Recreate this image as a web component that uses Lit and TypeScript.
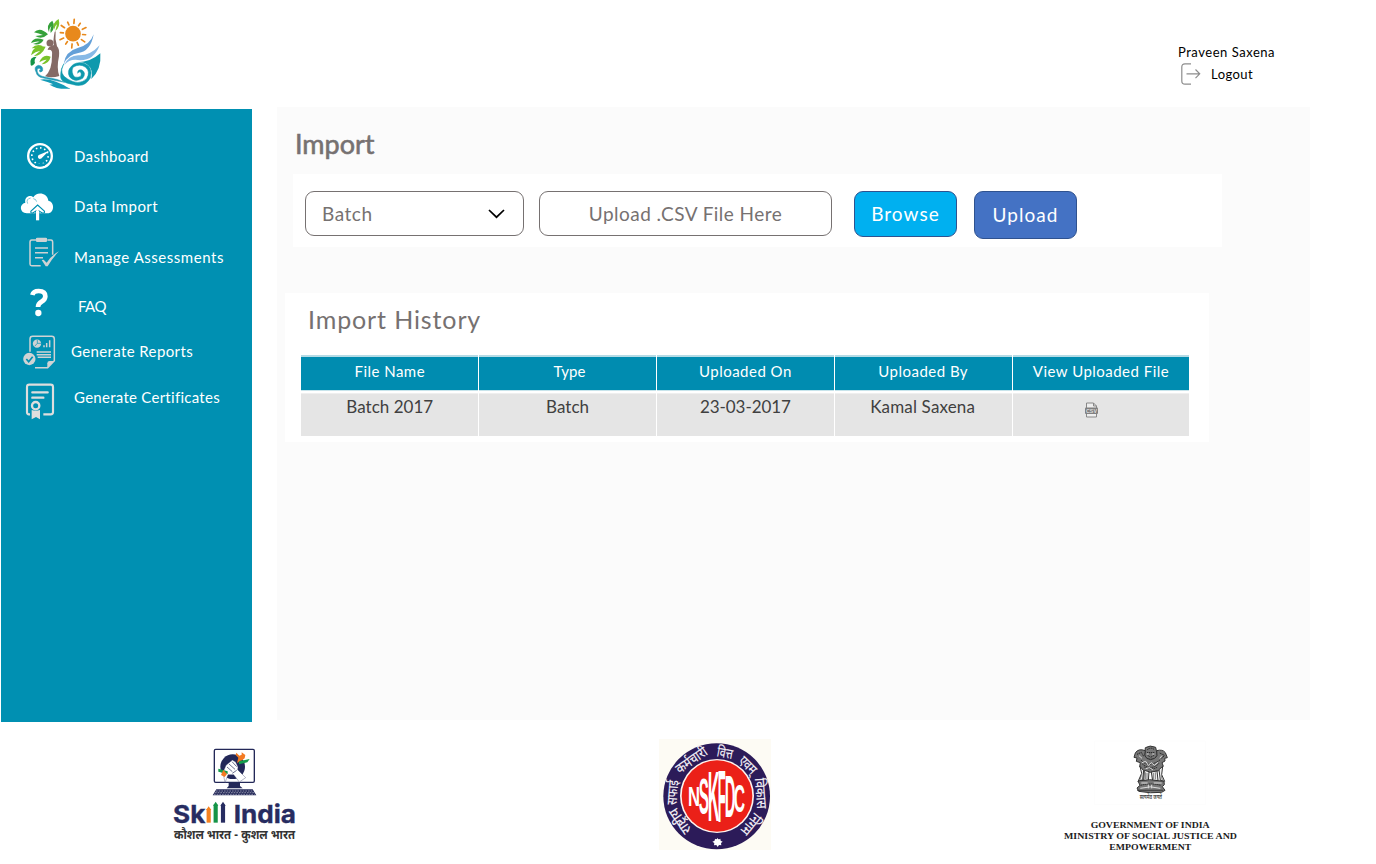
import { LitElement, html, svg, css } from "lit";

/* Navigation icons; each is drawn at three units per pixel. */
const icons = {
  dashboard: svg`<circle cx="120" cy="168" r="35.5" fill="none" stroke="#fff" stroke-width="7"/>
    <circle cx="120" cy="168" r="24.5" fill="none" stroke="#fff" stroke-width="5" stroke-dasharray="4.6 8.2" pathLength="154" stroke-dashoffset="38" />
    <path d="M106 190h28v8h-28z" fill="#0090b2"/>
    <path d="M147 152L126 173a6.500 6.500 0 1 1-8-9z" fill="#fff"/>`,
  cloud: svg`<path d="M80 340C58 338 57 312 76 308C72 290 91 283 100 292C108 274 142 276 145 302C164 306 164 335 146 340Z" fill="#fff"/>
    <path d="M83 311q-6-14 9-17M100 296q8 1 10 9" fill="none" stroke="#0090b2" stroke-width="1.500"/>
    <path d="M113 315L93 333q-3 6 5 6L108 333V361h9V333l10 6q9 1 6-6Z" fill="#fff" stroke="#0090b2" stroke-width="3.5"/>
    <path d="M108 332h9.500v29h-9.500z" fill="#fff"/>`,
  clipboard: svg`<g fill="none" stroke="#cfd2d3" stroke-width="4.500"><path d="M108 420H95q-5 0-5 7v65q0 5 5 5h27M142 420h11q5 0 5 7v37"/><path d="M105 444h39M105 458h39M105 473h24"/></g>
    <path d="M108 415q0-2 4-2h25q4 0 4 2v9q0 2-4 2h-25q-4 0-4-2zM125 480l6-1 9 9q15-23 37-34q-19 19-34 45h-6z" fill="#cfd2d3"/>`,
  faq: svg`<path d="M97 60q3-12 19-12q20 0 20 16q0 10-11 16q-11 6-11 16" fill="none" stroke="#fff" stroke-width="14"/><circle cx="115" cy="114" r="9.500" fill="#fff"/>`,
  report: svg`<path d="M90 230v-38q0-8 8-8h57q8 0 8 8v65l-20 21H105" fill="none" stroke="#d0d3d4" stroke-width="4.500"/>
    <path d="M142 278v-13q0-7 7-7h14z" fill="#d0d3d4"/><circle cx="111" cy="206" r="12.500" fill="#d0d3d4"/><path d="M112 195v10h11M112 205l-8 9" fill="none" stroke="#0090b2" stroke-width="2"/>
    <path d="M132 217v-6M140 217v-13M149 217v-21" stroke="#d0d3d4" stroke-width="4.500"/><path d="M110 231h43M110 239h43M113 247h40" stroke="#d0d3d4" stroke-width="4.500"/>
    <circle cx="88" cy="252" r="18.500" fill="#d0d3d4"/><path d="M79 252l7 8 12-15" fill="none" stroke="#0090b2" stroke-width="5"/>`,
  certificate: svg`<path d="M90 418h-3q-6 0-6-6V336q0-7 7-7h64q7 0 7 7v76q0 6-7 6H130" fill="none" stroke="#dedede" stroke-width="6.500"/>
    <path d="M97 352h46M97 368h33" stroke="#dedede" stroke-width="7" stroke-linecap="round"/><circle cx="107" cy="392" r="11" fill="none" stroke="#dedede" stroke-width="7"/>
    <path d="M95 405q12 5 25 0v28l-12-7-13 7z" fill="#dedede"/>`,
};

const nav = [
  { label: "Dashboard", cls: "n1", view: "0 93 180 150", icon: icons.dashboard },
  { label: "Data Import", cls: "n2", view: "0 243 180 150", icon: icons.cloud },
  { label: "Manage Assessments", cls: "n3", view: "0 393 180 156", icon: icons.clipboard },
  { label: "FAQ", cls: "n4", view: "0 24 180 138", icon: icons.faq },
  { label: "Generate Reports", cls: "n5", view: "0 162 180 135", icon: icons.report },
  { label: "Generate Certificates", cls: "n6", view: "0 297 180 141", icon: icons.certificate },
];

const columns = ["File Name", "Type", "Uploaded On", "Uploaded By", "View Uploaded File"];
const row = ["Batch 2017", "Batch", "23-03-2017", "Kamal Saxena"];

const rays = Array.from({ length: 12 }, (_, i) => i * 30);

const brand = svg`
  <g fill="#e8891c"><circle cx="174" cy="86" r="23.500"/></g>
  <g stroke="#e8891c" stroke-width="5" stroke-linecap="round">${rays.map((a) => svg`<path d="M174 ${a % 60 ? 57 : 55}V${a % 60 ? 48 : 43}" transform="rotate(${a + 5} 174 86)"/>`)}</g>
  <g fill="#35a13a">
    <path d="M102 82Q92 59 112 47Q124 68 107 84Q105 74 109 62Q102 70 102 82Z"/>
    <path d="M57 82Q75 64 99 88Q81 105 61 93L84 90Q72 86 57 82Z"/>
    <path d="M48 114Q56 93 86 104Q76 123 54 117L74 110Q62 108 48 114Z"/>
  </g>
  <g fill="#79c32b">
    <path d="M117 74Q110 54 131 42Q137 65 121 78L126 58Q119 63 117 74Z"/>
    <path d="M48 151Q53 119 92 125Q81 151 56 154L76 137Q61 139 48 151Z"/>
    <path d="M50 130Q64 115 83 123Q69 140 53 136L70 128Z"/>
    <path d="M73 172Q83 144 107 155Q102 177 80 178L95 164Q85 163 73 172Z"/>
  </g>
  <path d="M47 180Q41 155 65 155Q56 163 60 174Q51 186 47 180Z" fill="#159447"/>
  <circle cx="105" cy="114" r="10.500" fill="#856a65"/>
  <path d="M119 80Q113 110 117 120Q99 124 98 135Q114 132 111 151Q112 195 90 214Q110 220 133 213Q124 190 132 154Q134 130 126 124Q119 101 122 79Z" fill="#856a65"/>
  <path d="M236 88Q225 120 188 129Q151 139 146 177Q160 148 190 144Q227 139 236 88Z" fill="#64a0d8"/>
  <path d="M254 121Q225 153 190 151Q160 152 148 180Q165 159 196 166Q237 166 254 121Z" fill="#87b9e6"/>
  <path d="M256 145Q260 193 229 222Q235 194 219 181Q208 169 188 172Q227 171 256 145Z" fill="#0e99ad"/>
  <path d="M144 181Q132 209 158 222Q191 243 215 221Q227 201 212 187Q194 174 174 187Q167 203 179 216Q202 220 198 203Q192 197 188 205Q187 192 201 195Q215 204 203 220Q180 234 164 216Q154 199 169 184Q181 169 208 175Q235 187 226 219Q208 251 171 238Q133 232 137 209Q137 190 147 176Z" fill="#0e99ad" stroke="#0e99ad" stroke-width="1.500"/>
  <path d="M64 203Q54 185 70 181Q85 182 83 197Q77 205 72 197Q80 196 74 190Q61 190 70 207Q77 215 100 218Q129 222 149 232Q106 224 76 217Q64 210 64 203Z" fill="#2198b3" stroke="#2198b3" stroke-width="1.500"/>
  <path d="M75 224Q112 218 165 252Q128 246 102 239Q140 243 75 224ZM104 239Q132 231 166 251Q126 254 104 239Z" fill="#159bb7"/>`;

const skillIndia = svg`
  <rect x="193" y="43" width="120" height="99" rx="4" fill="#fff" stroke="#232858" stroke-width="4"/>
  <circle cx="248" cy="95" r="37" fill="#232858"/>
  <path d="M236 142h34v11l8 7h-48l6-7z" fill="#232858"/>
  <path d="M199 163h109l11 18H188z" fill="#232858"/>
  <g stroke="#fff" stroke-width="1.400" stroke-dasharray="5 3"><path d="M198 168h112M195 173h117M192 178h122"/></g>
  <path d="M225 143L219 112L228 91L247 75L257 81L264 96L263 104L287 128L268 141L251 119L234 119Z" fill="#fff" stroke="#232858" stroke-width="1"/>
  <path d="M231 96l16 14M237 87l18 16M246 80l14 15M260 106l-13 9" fill="none" stroke="#232858" stroke-width="2"/>
  <path d="M205 101L233 109V117L205 110ZM267 79L299 72L292 82L267 88Z" fill="#149b4b"/>
  <path d="M262 80L265 68L257 60L259 53L268 62L275 59L275 52L286 60L284 70L276 76L269 78L262 85ZM220 105L231 117L224 126L213 120Z" fill="#f37b22"/>
  <g font-family="Inter, sans-serif" font-weight="700" font-size="74" fill="#272c61" stroke="#272c61" stroke-width="1">
    <text x="69" y="263" textLength="97" lengthAdjust="spacingAndGlyphs">Sk</text><text x="251" y="263" textLength="187" lengthAdjust="spacingAndGlyphs">India</text>
  </g>
  <g stroke-width="12.500"><path d="M176 263V222" stroke="#f58220"/><path d="M197 263V209" stroke="#159447"/><path d="M219 263V209" stroke="#272c61"/></g>
  <path d="M168 225L176 214L184 225Z" fill="#f58220"/><path d="M189 212L197 200L205 212Z" fill="#159447"/><path d="M211 212L219 200L227 212Z" fill="#272c61"/>
  <text x="72" y="313" font-family="'Noto Sans Devanagari','Noto Sans',sans-serif" font-weight="700" font-size="36" fill="#333" textLength="363" lengthAdjust="spacingAndGlyphs">कौशल भारत - कुशल भारत</text>`;

/* Acronym letters follow the lens shape of the disc: x, baseline, width, height. */
const acronym: [string, number, number, number, number][] = [
  ["N", 114, 214, 36, 58], ["S", 146, 238, 33, 106], ["K", 173, 259, 35, 148],
  ["F", 203, 262, 28, 155], ["D", 224, 246, 32, 126], ["C", 251, 230, 34, 82],
];
const arcWords: [string, number, number][] = [
  ["राष्ट्रीय", -124, 84], ["सफाई", -85, 74], ["कर्मचारी", -35, 106], ["वित्त", 11, 48], ["एवम्", 45, 58], ["विकास", 86, 92], ["निगम", 129, 72],
];

const nskfdc = svg`
  <rect x="27" y="12" width="336" height="333" fill="#fdfbf4"/>
  <ellipse cx="200" cy="184" rx="160" ry="159" fill="#2c1b59"/>
  <ellipse cx="201" cy="183" rx="111" ry="111" fill="#fff3ee"/><ellipse cx="201" cy="183" rx="106" ry="107" fill="#eb2018"/>
  <g font-family="'Liberation Sans', sans-serif" font-weight="700" font-size="100" fill="#fff">
    ${acronym.map(([c, x, y, w, h]) => svg`<text transform="translate(${x} ${y}) scale(${w / 72} ${h / 70})">${c}</text>`)}
  </g>
  <g font-family="'Noto Sans Devanagari','Noto Sans',sans-serif" font-weight="500" font-size="43" fill="#eeeaf2" text-anchor="middle">
    ${arcWords.map(([t, a, w]) => svg`<text x="200" y="66" transform="rotate(${a} 200 184)" textLength="${w}" lengthAdjust="spacingAndGlyphs">${t}</text>`)}
  </g>
  <circle cx="202" cy="320" r="8" fill="#fff"/><path d="M202 308l3 6 6-3 1 6 6 3-5 4 1 7-7-1-4 6-4-6-7 1 1-7-6-4 7-3 1-6 5 3z" fill="#fff"/>`;

const emblem = svg`
  <rect x="134" y="18" width="332" height="191" fill="#fff" stroke="#fcfcfc" stroke-width="2"/>
  <g fill="#777" stroke="#333" stroke-width="3">
    <path d="M286 38Q300 29 317 37L322 61Q315 75 302 73Q288 73 284 60Z"/>
    <path d="M286 47Q265 39 256 54L252 67L261 69L259 79L271 83L269 95L281 108L301 112L326 107L340 94L336 83L345 78L344 70L352 68L346 53Q338 42 320 47L321 62Q315 73 302 74Q288 73 284 61Z"/>
    <path d="M270 94L281 107L278 134L264 140L275 115ZM283 106L297 110L295 137L281 136ZM304 111L321 108L324 136L308 138ZM327 104L338 94L335 119L344 139L331 136Z" fill="#eee"/>
    <path d="M264 138L299 134L342 139L343 149L337 155L345 166L335 172Q301 176 266 169L261 159L270 151Z"/>
  </g>
  <g fill="none" stroke="#222" stroke-width="3" stroke-dasharray="4 2"><path d="M292 44q11-9 21 0M291 53h24M293 61l9 6 12-7M261 58l13-6 7 12M329 54l14 7-9 11M273 75q22 26 58-1M277 87q28 22 51-3M283 96q19 12 40 0M262 166h78M272 151q30-8 61 0"/></g>
  <g fill="none" stroke="#ddd" stroke-width="3"><path d="M290 57h6M307 57h6M267 62l9 8M336 62l-7 8M276 83l11-4 8 12 9-8 9 8 11-9M287 101l12-3 10 7M274 144h19M311 144h24M271 160q30-9 60 0M295 149v11M305 149v11"/></g>
  <g stroke="#444" stroke-width="2"><path d="M286 112v20M291 114v19M310 114v20M316 112v21M274 121l-5 16M334 121l3 15"/></g>
  <text x="269" y="192" font-family="'Noto Sans Devanagari','Noto Sans',sans-serif" font-weight="600" font-size="18" fill="#444" textLength="67" lengthAdjust="spacingAndGlyphs">सत्यमेव जयते</text>
  <g font-family="'Liberation Serif', serif" font-weight="700" font-size="26.500" fill="#1c1c1c">
    <text x="122" y="280" textLength="357" lengthAdjust="spacingAndGlyphs">GOVERNMENT OF INDIA</text>
    <text x="42" y="312" textLength="519" lengthAdjust="spacingAndGlyphs">MINISTRY OF SOCIAL JUSTICE AND</text>
    <text x="178" y="344" textLength="246" lengthAdjust="spacingAndGlyphs">EMPOWERMENT</text>
  </g>`;

class AppRoot extends LitElement {
  static styles = css`
    :host { display: block; width: 1376px; height: 864px; overflow: hidden; background: #fff; font-family: Lato, "Open Sans", sans-serif; box-sizing: border-box; }
    * { box-sizing: border-box; }
    svg { display: block; flex: none; }
    header { height: 107px; display: flex; justify-content: space-between; padding: 5px 101px 0 15px; }
    .user { width: 97px; padding-top: 36px; font-size: 13px; line-height: 22px; letter-spacing: .53px; white-space: nowrap; color: #000; }
    .logout { display: flex; align-items: center; gap: 10px; padding-left: 3px; letter-spacing: .45px; }
    .body { display: flex; height: 615px; }
    nav { margin: 2px 25px 0 1px; width: 251px; height: 613px; padding-top: 22px; background: #0090b2; color: #fff; display: flex; flex-direction: column; }
    .item { display: flex; align-items: center; height: 50px; font-size: 15px; white-space: nowrap; }
    .item svg { width: 60px; margin-left: -1px; margin-right: 14px; height: 100%; }
    .item span { line-height: 20px; }
    .n1 { letter-spacing: .38px; } .n2 { letter-spacing: .42px; }
    .n3 { height: 52px; letter-spacing: .53px; }
    .n4 { height: 46px; letter-spacing: -.5px; } .n4 svg { margin-right: 18px; }
    .n5 { height: 45px; letter-spacing: .38px; } .n5 svg { margin-right: 11px; }
    .n6 { height: 47px; letter-spacing: .27px; }
    .n5 span, .n6 span { margin-bottom: 2px; }
    main { width: 1033px; height: 613px; background: #fbfbfb; color: #767171; padding: 19px 0 0 8px; }
    h1 { margin: 0 0 0 10px; font-size: 27px; font-weight: 400; line-height: 35px; height: 48px; letter-spacing: -.02px; -webkit-text-stroke: .6px #767171; }
    .bar { margin-left: 8px; width: 929px; height: 73px; padding: 17px 12px; display: flex; align-items: flex-start; background: #fff; font-size: 19px; }
    .field, .btn { border: 1px solid #767171; border-radius: 9px; height: 45px; display: flex; align-items: center; white-space: nowrap; }
    .select { width: 219px; padding: 0 18px 0 16px; justify-content: space-between; letter-spacing: .55px; margin-right: 15px; }
    .file { width: 293px; justify-content: center; margin-right: 22px; letter-spacing: .45px; }
    .btn { justify-content: center; width: 103px; height: 46px; color: #fff; border-color: #2f528f; font: inherit; letter-spacing: 1.05px; padding: 0 0 2px; }
    .browse { background: #00b0f0; margin-right: 17px; }
    .upload { background: #4472c4; height: 48px; }
    .history { margin-top: 46px; width: 924px; height: 149px; padding: 10px 19px 0 16px; background: #fff; }
    h2 { margin: 0 0 0 7px; font-weight: 400; font-size: 25px; height: 52px; line-height: 33px; letter-spacing: .88px; }
    .grid { display: grid; grid-template-columns: repeat(5, 1fr); column-gap: 1px; width: 888px; text-align: center; margin-left: .4px; }
    .head { height: 36px; border-top: 2px solid #b5dbe5; border-bottom: 1px solid #c8e4eb; background: #008cb0; color: #fff; font-size: 15px; line-height: 29px; letter-spacing: .48px; white-space: nowrap; }
    .cell { height: 43px; margin-top: 2px; background: #e5e5e5; border-top: 1px solid #efefef; color: #404040; font-size: 17px; line-height: 26px; letter-spacing: .02px; white-space: nowrap; }
    .head:nth-child(2) { letter-spacing: .15px; padding-left: 4px; }
    .cell svg { margin: 8px auto 0; position: relative; left: -9px; }
    .type { letter-spacing: .03px; } .date { letter-spacing: -.05px; } .by { letter-spacing: .16px; padding-right: 1px; }
    footer { height: 142px; padding: 13px 0 0 150px; display: flex; }
    .skill { margin-right: 330px; }
    .nskfdc { margin-right: 270px; }
  `;

  render() {
    return html`
      <header>
        <svg width="110" height="100" viewBox="0 0 330 300">${brand}</svg>
        <div class="user">
          <div>Praveen Saxena</div>
          <div class="logout">
            <svg width="20" height="22" viewBox="0 0 20 22" fill="none" stroke="#8d8d8d" stroke-width="1.200"><path d="M10 .8H4Q.8.8.8 4v14Q.8 21.2 4 21.2h6M5.5 10.8h13M14.5 6.500l4.200 4.300-4.200 4.300"/></svg>
            <span>Logout</span>
          </div>
        </div>
      </header>
      <div class="body">
        <nav>${nav.map((n) => html`<div class="item ${n.cls}"><svg viewBox=${n.view}>${n.icon}</svg><span>${n.label}</span></div>`)}</nav>
        <main>
          <h1>Import</h1>
          <section class="bar">
            <div class="field select"><span>Batch</span><svg width="17" height="10" viewBox="0 0 17 10" fill="none" stroke="#000" stroke-width="1.700"><path d="M1 1l7.500 7.200L16 1"/></svg></div>
            <div class="field file">Upload .CSV File Here</div>
            <button class="btn browse">Browse</button>
            <button class="btn upload">Upload</button>
          </section>
          <section class="history">
            <h2>Import History</h2>
            <div class="grid">
              ${columns.map((c) => html`<div class="head">${c}</div>`)}
              ${row.map((c, i) => html`<div class="cell ${["", "type", "date", "by"][i]}">${c}</div>`)}
              <div class="cell"><svg width="13" height="16" viewBox="0 0 13 16"><path d="M1.500 7V1h7l3 3v3M1.500 12v3h10v-3M8.500 1v3h3" fill="#eee" stroke="#888"/><rect y="5.500" width="13" height="6.500" rx="1" fill="#808080"/><text x="1" y="11" font-family="Liberation Sans" font-size="5.500" font-weight="700" fill="#ddd" textLength="11" lengthAdjust="spacingAndGlyphs">CSV</text></svg></div>
            </div>
          </section>
        </main>
      </div>
      <footer>
        <svg class="skill" width="170" height="125" viewBox="0 0 510 375">${skillIndia}</svg>
        <svg class="nskfdc" width="130" height="125" viewBox="0 0 390 375">${nskfdc}</svg>
        <svg width="200" height="125" viewBox="0 0 600 375">${emblem}</svg>
      </footer>`;
  }
}
customElements.define("app-root", AppRoot);
